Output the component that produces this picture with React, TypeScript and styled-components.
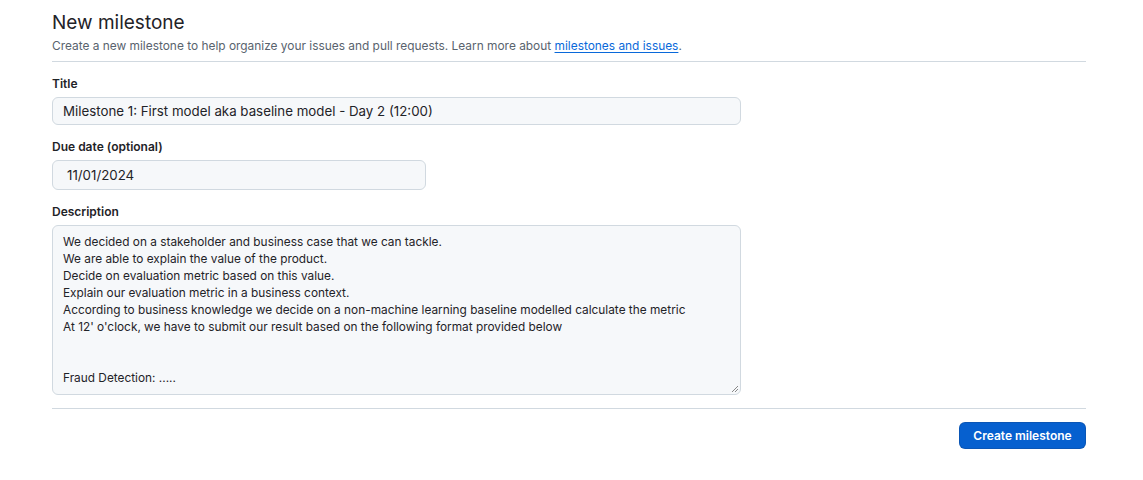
import React from "react";
import styled, { createGlobalStyle } from "styled-components";

const Global = createGlobalStyle`
  html, body { margin: 0; padding: 0; background: #ffffff; }
  body { font-family: Inter, "Liberation Sans", sans-serif; color: #1f2328; }
  * { box-sizing: border-box; }
`;

const Page = styled.div`
  padding: 8px 57px 0 52px;
  width: 1143px;
`;

const Subhead = styled.div`
  padding-bottom: 7px;
  border-bottom: 1px solid #d1d9e0;
  margin-bottom: 13px;
`;

const Heading = styled.h2`
  margin: 0;
  font-size: 19px;
  font-weight: 400;
  line-height: 30px;
`;

const Lead = styled.p`
  margin: 0;
  font-size: 11.9px;
  color: #59636e;
  line-height: 16px;
`;

const Link = styled.a`
  color: #0969da;
  text-decoration: underline;
  text-underline-offset: 2px;
`;

const Field = styled.div`
  display: flex;
  flex-direction: column;
  gap: 4px;
  margin-bottom: 13px;
`;

const Label = styled.label`
  font-size: 12px;
  font-weight: 600;
  line-height: 18px;
`;

const Input = styled.div<{ $w: number; $h: number; $pad: number }>`
  width: ${(p) => p.$w}px;
  height: ${(p) => p.$h}px;
  background: #f6f8fa;
  border: 1px solid #d1d9e0;
  border-radius: 6px;
  font-size: 13.3px;
  display: flex;
  align-items: center;
  padding: 0 ${(p) => p.$pad}px;
`;

const Textarea = styled.div`
  position: relative;
  width: 689px;
  height: 170px;
  background: #f6f8fa;
  border: 1px solid #d1d9e0;
  border-radius: 6px;
  font-size: 11.85px;
  line-height: 17px;
  padding: 8px 10px;
  white-space: pre;
`;

const Grip = styled.svg`
  position: absolute;
  right: 1px;
  bottom: 1px;
`;

const Footer = styled.div`
  border-top: 1px solid #d1d9e0;
  margin-top: 1px;
  padding-top: 13px;
  display: flex;
  justify-content: flex-end;
`;

const Button = styled.button`
  height: 27px;
  width: 127px;
  background: #0660cf;
  color: #fff;
  border: 1px solid rgba(31, 35, 40, 0.15);
  border-radius: 6px;
  font-family: inherit;
  font-size: 12px;
  font-weight: 600;
`;

const desc = `We decided on a stakeholder and business case that we can tackle.
We are able to explain the value of the product.
Decide on evaluation metric based on this value.
Explain our evaluation metric in a business context.
According to business knowledge we decide on a non-machine learning baseline modelled calculate the metric
At 12' o'clock, we have to submit our result based on the following format provided below


Fraud Detection: .....`;

export default function App() {
  return (
    <>
      <Global />
      <Page>
        <Subhead>
          <Heading>New milestone</Heading>
          <Lead>
            Create a new milestone to help organize your issues and pull requests. Learn more about{" "}
            <Link href="#">milestones and issues</Link>.
          </Lead>
        </Subhead>
        <Field>
          <Label>Title</Label>
          <Input $w={689} $h={28} $pad={10}>Milestone 1: First model aka baseline model - Day 2 (12:00)</Input>
        </Field>
        <Field>
          <Label>Due date (optional)</Label>
          <Input $w={374} $h={30} $pad={14}>11/01/2024</Input>
        </Field>
        <Field>
          <Label>Description</Label>
          <Textarea>
            {desc}
            <Grip width="9" height="9" viewBox="0 0 9 9">
              <path d="M8 2 L2 8 M8 5 L5 8" stroke="#888" strokeWidth="1" />
            </Grip>
          </Textarea>
        </Field>
        <Footer>
          <Button>Create milestone</Button>
        </Footer>
      </Page>
    </>
  );
}
